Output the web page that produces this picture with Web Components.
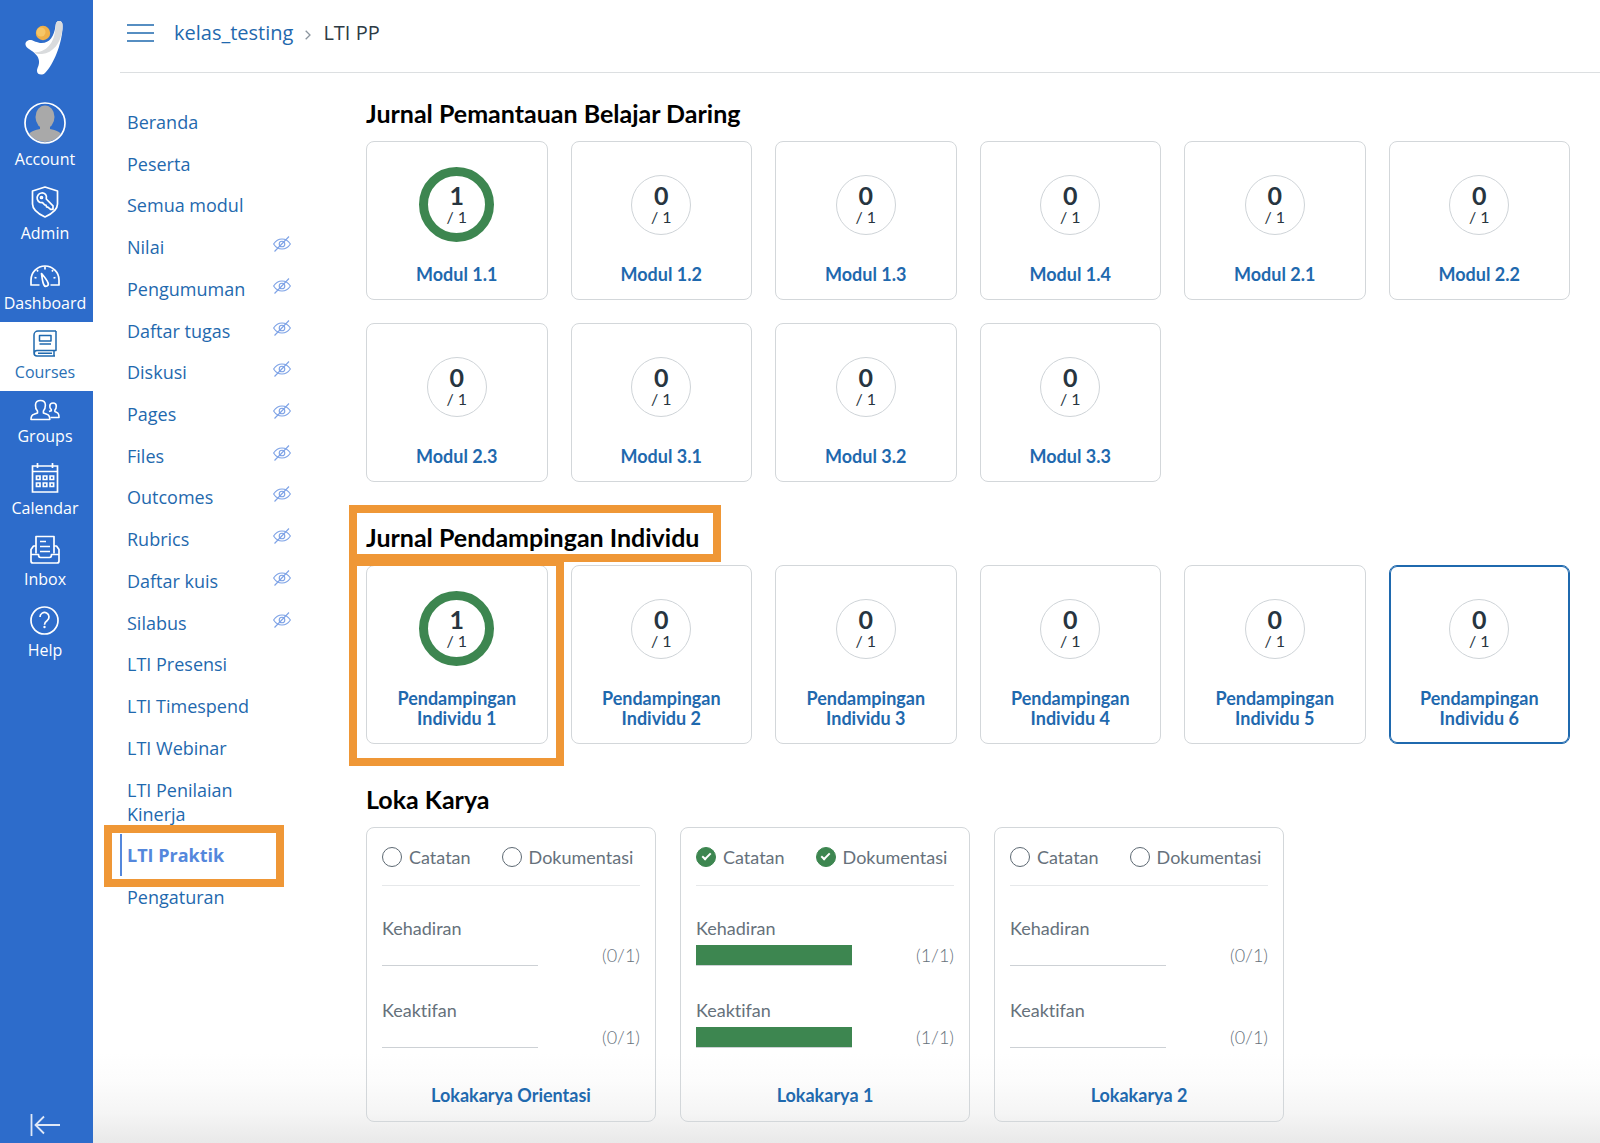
<!DOCTYPE html>
<html lang="id">
<head>
<meta charset="utf-8">
<title>LTI PP</title>
<style>
  :root {
    --rail: #2d6ccb;
    --link: #1f69ae;
    --green: #3d8650;
    --line: #d3d7da;
    --mark: #ef9736;
  }
  body { margin: 0; font-family: "Open Sans", "Liberation Sans", sans-serif; background: #fff; }
</style>
</head>
<body>
<lms-app></lms-app>

<script>
const define = (name, html, setup) => {
  const tpl = document.createElement('template');
  tpl.innerHTML = html;
  customElements.define(name, class extends HTMLElement {
    connectedCallback() {
      if (this.shadowRoot) return;
      this.attachShadow({ mode: 'open' }).append(tpl.content.cloneNode(true));
      if (setup) setup(this, this.shadowRoot);
    }
  });
};

const icons = {
  account: [42, 42, '<clipPath id="c"><circle cx="21" cy="21" r="19"/></clipPath><g clip-path="url(#c)" fill="#a9a9a9"><ellipse cx="21" cy="15" rx="9.500" ry="11.500"/><path d="M16 22h10v5c6 1 11 3 13 8v8H3v-8c2-5 7-7 13-8z"/></g><circle cx="21" cy="21" r="20" fill="none" stroke="#fff" stroke-width="1.700"/>'],
  admin: [28, 32, '<g fill="none" stroke="#fff" stroke-width="1.700" stroke-linejoin="round"><path d="M14 1 26.500 5v13c0 6-6 10-12.500 13C7.500 28 1.500 24 1.500 18V5z"/><circle cx="10.500" cy="11.500" r="1"/><path d="M14.500 8.300a5 5 0 1 0-5.500 8.200l2.500.1 2.300 2.400 1.200.2.600 1.700 1.600.5 2.300 1.900h2.500v-3.500L15.300 13c.4-1.700.2-3.500-.8-4.700z"/></g>'],
  dashboard: [30, 28, '<g fill="none" stroke="#fff" stroke-width="1.700" stroke-linejoin="round"><path d="M9.500 25H1v-5a14 14 0 0 1 28 0v5h-8.500"/><path d="M11.500 13.500c2.500 3 6 7 6.500 9.500a2.200 2.200 0 0 1-4 2c-1.500-2.500-2-8-2.500-11.500zM15 6.500v3M7 10l1 1.500M23 10l-1 1.500M4.500 17.500l2 .5M25.500 17.500l-2 .5"/></g>'],
  courses: [24, 27, '<g fill="none" stroke="#1f69ae" stroke-width="1.500" stroke-linejoin="round"><path d="M23 1H5a4 4 0 0 0-4 4v18a3 3 0 0 0 3 3h18M23 1v19.500H4a2.700 2.700 0 0 0 0 5.500M1 23V5M21 20.500V26M5 23.300h14"/><path d="M6.500 5.500h11.500v5.500H6.500zM6.500 14h11.500"/></g>'],
  groups: [30, 22, '<g fill="none" stroke="#fff" stroke-width="1.600" stroke-linejoin="round"><path d="M1 20.500c0-3 .5-4.500 3-5.200l3.500-1.300v-2C6 10.500 5.300 8.500 5.500 6 5.500 3 7.500 1.500 10.500 1.500S15.300 3 15.400 6c0 2.500-.6 4.500-2 6v2l3.500 1.300c2.400.7 2.900 2.200 2.900 5.200z"/><path d="M19 12.500c1-.4 1.800-.6 2.300-.8v-1c-1.300-1.200-1.600-2.400-1.500-3.700C19.900 5 21.200 4 23.100 4s3.100 1 3.200 3c0 1.600-.3 2.900-1.400 4v1.600l2 .8c1.900.6 2.100 2.500 2.100 5.100h-8.500"/></g>'],
  calendar: [28, 30, '<g fill="none" stroke="#fff" stroke-width="1.700"><path d="M1.500 3h25v26h-25zM1.500 8.500h25M6.500 0v5M21.500 0v5"/><path d="M5.500 13h3.500v3.500H5.500zM12.300 13h3.500v3.500h-3.500zM19.100 13h3.500v3.500h-3.500zM5.500 20h3.500v3.500H5.500zM12.300 20h3.500v3.500h-3.500zM19.100 20h3.500v3.500h-3.500z"/></g>'],
  inbox: [30, 29, '<g fill="none" stroke="#fff" stroke-width="1.700" stroke-linejoin="round"><path d="M6 18.500V1.500h18v17M10 6.500h6M10 11.500h10M10 16.500h10"/><path d="M6 11H3.500L1 14.500V26a2 2 0 0 0 2 2h24a2 2 0 0 0 2-2V14.500L26.500 11H24M1 19.500h7.500c0 2 .5 3 2 3h9c1.500 0 2-1 2-3H29"/></g>'],
  help: [30, 29, '<g fill="none" stroke="#fff" stroke-width="1.700"><circle cx="14.500" cy="14.500" r="13.500"/><path d="M10 11a4.500 4.500 0 1 1 7 3.700c-1.700 1.200-2.500 2-2.500 4"/></g><circle cx="14.500" cy="21" r="1.200" fill="#fff"/>'],
};

define('rail-item', `
  <style>
    :host { display: block; }
    a { display: flex; flex-direction: column; align-items: center; gap: 4px; padding: 8px 0;
        margin-right: 3px; color: #fff; font-size: 16px; line-height: 22px; text-decoration: none; }
    :host([active]) { background: #fff; }
    :host([active]) a { color: #2a70b5; }
    svg { display: block; }
  </style>
  <a href="#"><span id="icon"></span><slot></slot></a>
`, (el, root) => {
  const [w, h, body] = icons[el.getAttribute('icon')];
  root.getElementById('icon').innerHTML =
    `<svg width="${w}" height="${h}" viewBox="0 0 ${w} ${h}" aria-hidden="true">${body}</svg>`;
});

define('lms-rail', `
  <style>
    :host { display: flex; flex-direction: column; background: var(--rail); }
    .logo { display: flex; justify-content: center; height: 75px; margin-right: 3px; padding-top: 19px; text-decoration: none; }
    button { margin: auto 3px 7px 0; padding: 0; border: 0; background: none; display: flex; justify-content: center; }
  </style>
  <a class="logo" href="#" aria-label="Beranda">
    <svg width="42" height="58" viewBox="0 0 42 58">
      <path d="M35 2c3 0 4 2 3.500 8C37.500 25 30 45 21 54c-3 3-8 1.500-8-2 0-3 2.500-6 2-10C14.500 37 11 34 5 30c-4-2-5-7-1-8.500C8 20 10 23 16 24c9 1 14-6 15.500-17 .4-3.500 1.500-5 3.500-5z" fill="#fff"/>
      <path d="M35 2c3 0 4 2 3.500 8C37 24 29 34 18 35c-3 .3-6-.3-8-1.500C22 33 31 25 31.500 7 31.700 3.500 33 2 35 2z" fill="#d9dbdd"/>
      <circle cx="19" cy="14" r="7.200" fill="#f0b049"/><circle cx="17" cy="13" r="4.500" fill="#f7c667"/>
    </svg>
  </a>
  <rail-item icon="account">Account</rail-item>
  <rail-item icon="admin">Admin</rail-item>
  <rail-item icon="dashboard">Dashboard</rail-item>
  <rail-item icon="courses" active>Courses</rail-item>
  <rail-item icon="groups">Groups</rail-item>
  <rail-item icon="calendar">Calendar</rail-item>
  <rail-item icon="inbox">Inbox</rail-item>
  <rail-item icon="help">Help</rail-item>
  <button aria-label="Minimize">
    <svg width="30" height="22" viewBox="0 0 30 22" fill="none" stroke="#dfe8f7" stroke-width="1.800"><path d="M1.500 0v22M30 11H6M14 2.500 5.500 11l8.500 8.500"/></svg>
  </button>
`);

define('lms-header', `
  <style>
    :host { display: flex; align-items: center; height: 66px; padding: 0 8px 6px; border-bottom: 1px solid #dcdfe1; font-size: 20px; line-height: 28px; }
    button { margin: 0 20px 0 -1px; padding: 0; border: 0; background: none; display: flex; }
    a { color: var(--link); text-decoration: none; }
    .sep { margin: 0 12px; padding-top: 3px; }
    .here { color: #2d3b45; }
    svg { display: block; }
  </style>
  <button aria-label="Menu"><svg width="27" height="20" viewBox="0 0 27 20" stroke="#1f69ae" stroke-width="1.700"><path d="M0 2h27M0 10h27M0 18h27"/></svg></button>
  <a href="#">kelas_testing</a>
  <span class="sep"><svg width="6" height="10" viewBox="0 0 6 10" fill="none" stroke="#8b959e" stroke-width="1.300"><path d="M.7.7 5 5 .7 9.300"/></svg></span>
  <span class="here">LTI PP</span>
`);

define('mark-box', `
  <style>:host { position: absolute; box-sizing: border-box; border: 8px solid var(--mark); pointer-events: none; z-index: 2; }</style>
`);

define('course-link', `
  <style>
    :host { display: flex; flex: 1 0 auto; position: relative; }
    a { display: flex; flex: 1; align-items: center; justify-content: space-between; padding: 8px 0 8px 5px;
        border-left: 2px solid transparent; color: var(--link); font-size: 18px; line-height: 24px; text-decoration: none; }
    :host([active]) a { color: #5487dc; font-weight: 700; border-color: #5487dc; }
    svg { display: none; flex: none; margin-bottom: 6px; }
    :host([hidden-item]) svg { display: block; }
    mark-box { inset: -9px 7px -11px -16px; display: none; }
    :host([active]) mark-box { display: block; }
  </style>
  <a href="#"><span><slot></slot></span>
    <svg width="18" height="16" viewBox="0 0 18 16" fill="none" stroke="#7da2e6" stroke-width="1.100" aria-hidden="true"><path d="M.6 8C3 4.300 6 3 9 3s6 1.300 8.400 5C15 11.700 12 13 9 13S3 11.700.6 8z"/><circle cx="9" cy="8" r="2.800"/><path d="M16 .5 1.500 15.500"/></svg>
  </a>
  <mark-box></mark-box>
`);

define('course-nav', `
  <style>:host { display: block; } nav { display: flex; flex-direction: column; min-height: 817px; }</style>
  <nav>
    <course-link>Beranda</course-link>
    <course-link>Peserta</course-link>
    <course-link>Semua modul</course-link>
    <course-link hidden-item>Nilai</course-link>
    <course-link hidden-item>Pengumuman</course-link>
    <course-link hidden-item>Daftar tugas</course-link>
    <course-link hidden-item>Diskusi</course-link>
    <course-link hidden-item>Pages</course-link>
    <course-link hidden-item>Files</course-link>
    <course-link hidden-item>Outcomes</course-link>
    <course-link hidden-item>Rubrics</course-link>
    <course-link hidden-item>Daftar kuis</course-link>
    <course-link hidden-item>Silabus</course-link>
    <course-link>LTI Presensi</course-link>
    <course-link>LTI Timespend</course-link>
    <course-link>LTI Webinar</course-link>
    <course-link>LTI Penilaian Kinerja</course-link>
    <course-link active>LTI Praktik</course-link>
    <course-link>Pengaturan</course-link>
  </nav>
`);

define('module-card', `
  <style>
    :host { display: block; position: relative; }
    a { box-sizing: border-box; height: 100%; display: flex; flex-direction: column; align-items: center; gap: 22px;
        padding: 25px 24px 15px; border: 1px solid var(--line); border-radius: 8px; text-decoration: none; text-align: center; }
    :host([selected]) a { border-color: var(--link); box-shadow: inset 0 0 0 1px var(--link); }
    .slot { display: flex; align-items: center; justify-content: center; width: 75px; height: 75px; }
    .ring { box-sizing: border-box; display: flex; flex-direction: column; align-items: center; justify-content: center;
        width: 60px; height: 60px; border: 1px solid #cfd4d8; border-radius: 50%; color: #273540; }
    :host([done]) .ring { width: 75px; height: 75px; border: 9px solid var(--green); }
    b { font-size: 25px; line-height: 23px; }
    small { font-size: 16px; line-height: 19px; }
    strong { color: var(--link); font-size: 18px; line-height: 20px; }
  </style>
  <a href="#"><span class="slot"><span class="ring"><b></b><small>/ 1</small></span></span><strong><slot></slot></strong></a>
  <slot name="mark"></slot>
`, (el, root) => { root.querySelector('b').textContent = el.hasAttribute('done') ? '1' : '0'; });

define('workshop-card', `
  <style>
    :host { display: block; }
    article { box-sizing: border-box; padding: 17px 15px 14px; border: 1px solid var(--line); border-radius: 8px;
        color: #66717b; font-size: 18px; line-height: 24px; }
    .checks { display: flex; gap: 31px; padding-bottom: 16px; border-bottom: 1px solid #e6e8ea; }
    label { display: flex; align-items: center; gap: 7px; }
    input { appearance: none; display: grid; place-content: center; box-sizing: border-box; width: 20px; height: 20px; margin: 0;
        border: 1px solid #5d6973; border-radius: 50%; }
    input:checked { border-color: var(--green); background: var(--green); }
    input:checked::after { content: ""; width: 7px; height: 3px; margin-bottom: 3px; border: solid #fff; border-width: 0 0 2px 2px; transform: rotate(-45deg); }
    .meter { display: grid; grid-template-columns: 156px 1fr; margin-top: 30px; row-gap: 5px; }
    .meter label { grid-column: 1 / 3; }
    .meter + .meter { margin-top: 32px; }
    progress { appearance: none; box-sizing: border-box; display: block; width: 156px; height: 21px; border: 0; border-bottom: 1px solid #cdd1d5; background: none; }
    progress::-webkit-progress-bar { background: none; }
    progress::-webkit-progress-value { background: var(--green); }
    .count { height: 21px; line-height: 21px; font-weight: 300; text-align: right; }
    .title { display: block; margin-top: 35px; color: var(--link); font-weight: 700; text-align: center; text-decoration: none; }
  </style>
  <article>
    <div class="checks">
      <label><input type="checkbox">Catatan</label>
      <label><input type="checkbox">Dokumentasi</label>
    </div>
    <div class="meter"><label for="a">Kehadiran</label><progress id="a" max="1"></progress><span class="count"></span></div>
    <div class="meter"><label for="b">Keaktifan</label><progress id="b" max="1"></progress><span class="count"></span></div>
    <a class="title" href="#"><slot></slot></a>
  </article>
`, (el, root) => {
  const n = el.hasAttribute('done') ? 1 : 0;
  root.querySelectorAll('input').forEach(i => { i.checked = !!n; });
  root.querySelectorAll('progress').forEach(p => { p.value = n; });
  root.querySelectorAll('.count').forEach(c => { c.textContent = `(${n}/1)`; });
});

define('journal-section', `
  <style>
    :host { display: block; }
    h2 { position: relative; width: fit-content; margin: 0 0 12px; color: #000; font-size: 25px; line-height: 32px; font-weight: 700; }
    .grid { display: grid; grid-template-columns: repeat(6, 1fr); gap: 23px; }
    :host([wide]) .grid { grid-template-columns: repeat(auto-fill, 290px); gap: 24px; }
    h2 mark-box { inset: -16px -22px -9px -17px; display: none; }
    :host([marked]) mark-box { display: block; }
  </style>
  <h2><span></span><mark-box></mark-box></h2>
  <div class="grid"><slot></slot></div>
`, (el, root) => { root.querySelector('span').textContent = el.getAttribute('heading'); });

define('lms-app', `
  <style>
    :host { display: grid; grid-template-columns: 93px 1fr; min-height: 100vh; }
    .page { display: flex; flex-direction: column; padding-left: 27px; background: linear-gradient(to top, #e9e9e9, #f5f5f5 30px, #fcfcfc 62px, #fff 90px); }
    .body { display: flex; flex: 1; }
    course-nav { flex: none; width: 171px; padding-top: 28px; }
    main { flex: 1; display: flex; flex-direction: column; gap: 39px; padding: 24px 30px 21px 75px;
        font-family: Lato, "Liberation Sans", sans-serif; font-variant-ligatures: none; }
    module-card mark-box { inset: -7px -16px -22px -17px; }
  </style>
  <lms-rail></lms-rail>
  <div class="page">
    <lms-header></lms-header>
    <div class="body">
      <course-nav></course-nav>
      <main>
        <journal-section heading="Jurnal Pemantauan Belajar Daring">
          <module-card done>Modul 1.1</module-card>
          <module-card>Modul 1.2</module-card>
          <module-card>Modul 1.3</module-card>
          <module-card>Modul 1.4</module-card>
          <module-card>Modul 2.1</module-card>
          <module-card>Modul 2.2</module-card>
          <module-card>Modul 2.3</module-card>
          <module-card>Modul 3.1</module-card>
          <module-card>Modul 3.2</module-card>
          <module-card>Modul 3.3</module-card>
        </journal-section>
        <journal-section heading="Jurnal Pendampingan Individu" marked>
          <module-card done>Pendampingan Individu 1<mark-box slot="mark"></mark-box></module-card>
          <module-card>Pendampingan Individu 2</module-card>
          <module-card>Pendampingan Individu 3</module-card>
          <module-card>Pendampingan Individu 4</module-card>
          <module-card>Pendampingan Individu 5</module-card>
          <module-card selected>Pendampingan Individu 6</module-card>
        </journal-section>
        <journal-section heading="Loka Karya" wide>
          <workshop-card>Lokakarya Orientasi</workshop-card>
          <workshop-card done>Lokakarya 1</workshop-card>
          <workshop-card>Lokakarya 2</workshop-card>
        </journal-section>
      </main>
    </div>
  </div>
`);
</script>
</body>
</html>
